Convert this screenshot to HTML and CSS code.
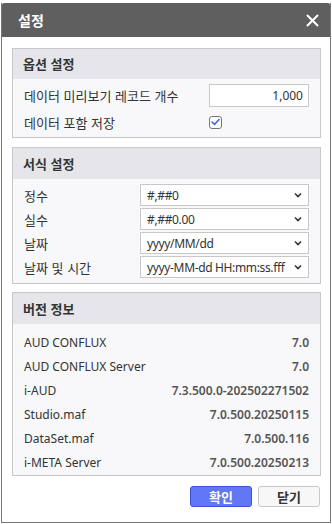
FILE: index.html
```html
<!DOCTYPE html>
<html lang="ko">
<head>
    <meta charset="UTF-8">
    <title>설정</title>
    <link rel="stylesheet" href="styles.css">
</head>
<body>
    <div class="dialog">
        <div class="dialog-header">
            <h1>설정</h1>
            <svg class="close" width="13" height="13" viewBox="0 0 13 13">
                <path d="M1.5 1.5 L11.5 11.5 M11.5 1.5 L1.5 11.5" stroke="#fff" stroke-width="2" stroke-linecap="round"/>
            </svg>
        </div>
        <div class="dialog-body">
            <div class="section section-option">
                <div class="section-title">옵션 설정</div>
                <div class="section-body option-body">
                    <div class="row">
                        <span class="label">데이터 미리보기 레코드 개수</span>
                        <input class="num-input" type="text" value="1,000">
                    </div>
                    <div class="row check-row">
                        <span class="label">데이터 포함 저장</span>
                        <span class="checkbox">
                            <svg width="9" height="8" viewBox="0 0 9 8">
                                <path d="M1 4 L3.5 6.5 L8 1.5" fill="none" stroke="#3d63e8" stroke-width="1.6" stroke-linecap="round" stroke-linejoin="round"/>
                            </svg>
                        </span>
                    </div>
                </div>
            </div>

            <div class="section section-format">
                <div class="section-title">서식 설정</div>
                <div class="section-body format-body">
                    <div class="row">
                        <span class="label">정수</span>
                        <div class="select"><span>#,##0</span><svg width="8" height="6" viewBox="0 0 8 6"><path d="M1 1.5 L4 4.5 L7 1.5" fill="none" stroke="#333" stroke-width="1.6"/></svg></div>
                    </div>
                    <div class="row">
                        <span class="label">실수</span>
                        <div class="select"><span>#,##0.00</span><svg width="8" height="6" viewBox="0 0 8 6"><path d="M1 1.5 L4 4.5 L7 1.5" fill="none" stroke="#333" stroke-width="1.6"/></svg></div>
                    </div>
                    <div class="row">
                        <span class="label">날짜</span>
                        <div class="select"><span>yyyy/MM/dd</span><svg width="8" height="6" viewBox="0 0 8 6"><path d="M1 1.5 L4 4.5 L7 1.5" fill="none" stroke="#333" stroke-width="1.6"/></svg></div>
                    </div>
                    <div class="row">
                        <span class="label">날짜 및 시간</span>
                        <div class="select"><span>yyyy-MM-dd HH:mm:ss.fff</span><svg width="8" height="6" viewBox="0 0 8 6"><path d="M1 1.5 L4 4.5 L7 1.5" fill="none" stroke="#333" stroke-width="1.6"/></svg></div>
                    </div>
                </div>
            </div>

            <div class="section section-version">
                <div class="section-title">버전 정보</div>
                <div class="section-body version-body">
                    <div class="ver-row"><span>AUD CONFLUX</span><span class="ver">7.0</span></div>
                    <div class="ver-row"><span>AUD CONFLUX Server</span><span class="ver">7.0</span></div>
                    <div class="ver-row"><span>i-AUD</span><span class="ver">7.3.500.0-202502271502</span></div>
                    <div class="ver-row"><span>Studio.maf</span><span class="ver">7.0.500.20250115</span></div>
                    <div class="ver-row"><span>DataSet.maf</span><span class="ver">7.0.500.116</span></div>
                    <div class="ver-row"><span>i-META Server</span><span class="ver">7.0.500.20250213</span></div>
                </div>
            </div>

            <div class="buttons">
                <button class="btn btn-ok">확인</button>
                <button class="btn btn-close">닫기</button>
            </div>
        </div>
    </div>
</body>
</html>
```

FILE: styles.css
```css
body {
    margin: 0;
    padding: 3px 0 0 1px;
    background: #fff;
    font-family: "Noto Sans", "Noto Sans CJK KR", sans-serif;
    font-size: 12px;
    color: #333;
}
.dialog {
    width: 330px;
    height: 520px;
    box-sizing: border-box;
    border: 1px solid #777;
    border-top: none;
    background: #fff;
}
.dialog-header {
    height: 34px;
    background: #5f5f5f;
    display: flex;
    align-items: center;
    justify-content: space-between;
    padding: 0 11px 0 16px;
    border-radius: 2px 2px 0 0;
}
.dialog-header h1 {
    margin: 0;
    font-size: 14px;
    font-weight: bold;
    color: #fff;
    font-family: "Noto Sans CJK KR", sans-serif;
}
.close {
    display: block;
}
.dialog-body {
    padding: 11px 9px 0 10px;
}
.section {
    border: 1px solid #c8c8cc;
    background: #f8f8fa;
}
.section-option {
    margin-bottom: 9px;
}
.section-format {
    margin-bottom: 8px;
}
.section-version {
    margin-bottom: 10px;
}
.section-title {
    height: 31px;
    line-height: 31px;
    background: #e6e6ea;
    padding-left: 10px;
    font-family: "Noto Sans CJK KR", sans-serif;
    font-size: 13px;
    font-weight: bold;
    color: #333;
}
.section-option .section-title {
    height: 30px;
    line-height: 30px;
}
.section-body {
    padding: 5px 11px 0 11px;
    box-sizing: border-box;
}
.row {
    display: flex;
    align-items: center;
    justify-content: space-between;
}
.label {
    font-family: "Noto Sans CJK KR", sans-serif;
    font-size: 13px;
    color: #333;
}
.option-body {
    height: 58px;
}
.num-input {
    width: 100px;
    height: 23px;
    box-sizing: border-box;
    border: 1px solid #c8c8c8;
    text-align: right;
    font-family: "Noto Sans", sans-serif;
    font-size: 12px;
    color: #333;
    padding: 0 5px;
    margin: 0;
}
.check-row {
    height: 20px;
    margin-top: 5px;
    justify-content: flex-start;
}
.check-row .label {
    width: 185px;
}
.checkbox {
    width: 13px;
    height: 13px;
    box-sizing: border-box;
    border: 1px solid #777;
    border-radius: 3px;
    background: #fff;
    display: flex;
    align-items: center;
    justify-content: center;
}
.format-body {
    height: 104px;
}
.format-body .row {
    margin-bottom: 2px;
}
.select {
    width: 169px;
    height: 22px;
    box-sizing: border-box;
    border: 1px solid #c8c8c8;
    background: #fff;
    display: flex;
    align-items: center;
    justify-content: space-between;
    padding: 0 6px 0 6px;
    font-size: 12px;
    letter-spacing: -0.35px;
    color: #333;
}
.version-body {
    height: 151px;
    padding: 6px 11px 1px 11px;
}
.ver-row {
    height: 24px;
    display: flex;
    align-items: center;
    justify-content: space-between;
    color: #333;
}
.ver {
    color: #555;
    font-weight: 600;
}
.buttons {
    display: flex;
    justify-content: flex-end;
    gap: 6px;
    padding: 0 1px 0 0;
}
.btn {
    width: 62px;
    height: 21px;
    border-radius: 3px;
    font-family: "Noto Sans CJK KR", sans-serif;
    font-size: 13px;
    font-weight: bold;
    cursor: pointer;
    padding: 0;
}
.btn-ok {
    background: #6177f6;
    border: 1px solid #3a52d6;
    color: #fff;
}
.btn-close {
    background: #f7f7f7;
    border: 1px solid #c8c8c8;
    color: #333;
}
```
